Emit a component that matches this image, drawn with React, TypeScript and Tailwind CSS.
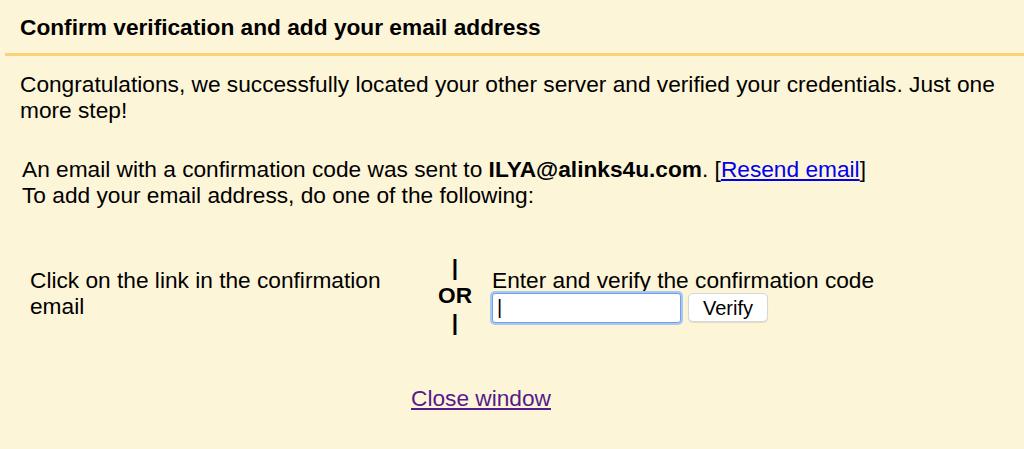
import React from "react";

export default function App() {
  return (
    <div
      className="w-[1024px] h-[449px] bg-[#fdf5d8] text-black overflow-hidden"
      style={{ fontFamily: '"Liberation Sans", Arial, sans-serif' }}
    >
      <div className="h-[53px] flex items-center pl-5">
        <h1 className="text-[22.7px] font-bold leading-[26px]">
          Confirm verification and add your email address
        </h1>
      </div>
      <div className="ml-[5px] h-[3px] bg-[#f9d27a]" />
      <p className="mt-[16px] pl-5 pr-6 text-[22.7px] leading-[25.5px]">
        Congratulations, we successfully located your other server and verified your credentials. Just one more step!
      </p>
      <div className="mt-[34px] pl-[22px] text-[22.7px] leading-[25.5px]">
        <div>
          An email with a confirmation code was sent to <b>ILYA@alinks4u.com</b>. [
          <a href="#" className="text-[#0000ee] underline">Resend email</a>]
        </div>
        <div>To add your email address, do one of the following:</div>
      </div>
      <div className="mt-[50px] flex text-[22.7px] leading-[25.5px]">
        <div className="pl-[30px] w-[420px] mt-[10px]">
          Click on the link in the confirmation email
        </div>
        <div className="w-[70px] flex flex-col items-center font-bold leading-[27.5px] -mt-[4px]">
          <span>|</span>
          <span>OR</span>
          <span>|</span>
        </div>
        <div className="ml-[2px] mt-[10px]">
          <div>Enter and verify the confirmation code</div>
          <div className="flex items-center mt-[-1px]">
            <input
              type="text"
              className="w-[189px] h-[30px] bg-white border border-[#6ea2e6] rounded-[3px] shadow-[0_0_0_2px_#a7c8f2] outline-none px-1 text-[20px]"
              defaultValue="|"
            />
            <button className="ml-[7px] w-[80px] h-[29px] bg-white border border-[#d6d6d6] rounded-[5px] text-[20px] leading-none shadow-[0_1px_1px_rgba(0,0,0,0.1)]">
              Verify
            </button>
          </div>
        </div>
      </div>
      <div className="mt-[49px] pl-[411px] text-[22.7px] leading-[25.5px]">
        <a href="#" className="text-[#551a8b] underline">Close window</a>
      </div>
    </div>
  );
}
